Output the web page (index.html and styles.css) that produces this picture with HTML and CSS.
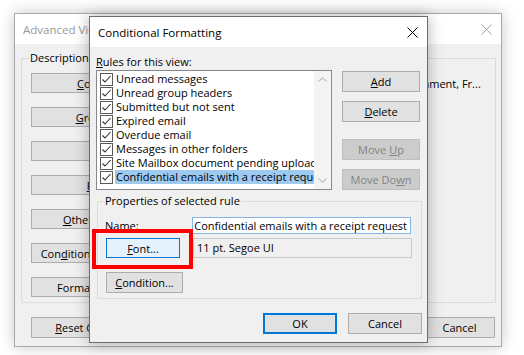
FILE: index.html
```html
<!DOCTYPE html>
<html>
<head>
  <meta charset="UTF-8">
  <title>Conditional Formatting</title>
  <link rel="stylesheet" href="styles.css">
</head>
<body>
  <div class="desktop">

    <!-- window behind: Advanced View Settings -->
    <section class="window back">
      <header class="titlebar">
        <span class="title">Advanced View Settings: Compact</span>
        <svg class="close" width="11" height="11" viewBox="0 0 11 11"><path d="M0.5 0.5L10.5 10.5M10.5 0.5L0.5 10.5"/></svg>
      </header>
      <div class="window-body">
        <fieldset class="group desc-group">
          <legend>Description</legend>
          <div class="desc-row"><button class="btn desc-btn"><u>C</u>olumns...</button><span class="desc-text">Importance, Reminder, Icon, Flag Status, Attachment, Fr...</span></div>
          <div class="desc-row"><button class="btn desc-btn"><u>G</u>roup By...</button><span class="desc-text">Conversation</span></div>
          <div class="desc-row"><button class="btn desc-btn"><u>S</u>ort...</button><span class="desc-text">Date (Conversation)</span></div>
          <div class="desc-row"><button class="btn desc-btn"><u>F</u>ilter...</button><span class="desc-text">Off</span></div>
          <div class="desc-row"><button class="btn desc-btn"><u>O</u>ther Settings...</button><span class="desc-text">Fonts and other Table View settings</span></div>
          <div class="desc-row"><button class="btn desc-btn">Con<u>d</u>itional Formatting...</button><span class="desc-text">User defined fonts on each message</span></div>
          <div class="desc-row"><button class="btn desc-btn">Format Col<u>u</u>mns...</button><span class="desc-text">Specify the display formats for each field</span></div>
        </fieldset>
        <div class="back-footer">
          <button class="btn reset-btn"><u>R</u>eset Current View</button>
          <button class="btn footer-btn">Cancel</button>
        </div>
      </div>
    </section>

    <!-- active dialog -->
    <section class="window front">
      <header class="titlebar">
        <span class="title">Conditional Formatting</span>
        <svg class="close" width="11" height="11" viewBox="0 0 11 11"><path d="M0.5 0.5L10.5 10.5M10.5 0.5L0.5 10.5"/></svg>
      </header>
      <div class="window-body">
        <div class="rules-area">
          <div class="rules-col">
            <div class="field-label"><u>R</u>ules for this view:</div>
            <div class="listbox">
              <div class="rules">
                <div class="rule"><svg class="check" width="13" height="13" viewBox="0 0 13 13"><rect x="0.5" y="0.5" width="12" height="12"/><path d="M2.5 6.5L5 9L10.5 3"/></svg><span class="rule-name">Unread messages</span></div>
                <div class="rule"><svg class="check" width="13" height="13" viewBox="0 0 13 13"><rect x="0.5" y="0.5" width="12" height="12"/><path d="M2.5 6.5L5 9L10.5 3"/></svg><span class="rule-name">Unread group headers</span></div>
                <div class="rule"><svg class="check" width="13" height="13" viewBox="0 0 13 13"><rect x="0.5" y="0.5" width="12" height="12"/><path d="M2.5 6.5L5 9L10.5 3"/></svg><span class="rule-name">Submitted but not sent</span></div>
                <div class="rule"><svg class="check" width="13" height="13" viewBox="0 0 13 13"><rect x="0.5" y="0.5" width="12" height="12"/><path d="M2.5 6.5L5 9L10.5 3"/></svg><span class="rule-name">Expired email</span></div>
                <div class="rule"><svg class="check" width="13" height="13" viewBox="0 0 13 13"><rect x="0.5" y="0.5" width="12" height="12"/><path d="M2.5 6.5L5 9L10.5 3"/></svg><span class="rule-name">Overdue email</span></div>
                <div class="rule"><svg class="check" width="13" height="13" viewBox="0 0 13 13"><rect x="0.5" y="0.5" width="12" height="12"/><path d="M2.5 6.5L5 9L10.5 3"/></svg><span class="rule-name">Messages in other folders</span></div>
                <div class="rule"><svg class="check" width="13" height="13" viewBox="0 0 13 13"><rect x="0.5" y="0.5" width="12" height="12"/><path d="M2.5 6.5L5 9L10.5 3"/></svg><span class="rule-name">Site Mailbox document pending upload</span></div>
                <div class="rule selected"><svg class="check" width="13" height="13" viewBox="0 0 13 13"><rect x="0.5" y="0.5" width="12" height="12"/><path d="M2.5 6.5L5 9L10.5 3"/></svg><span class="rule-name">Confidential emails with a receipt request</span></div>
              </div>
              <div class="scrollbar">
                <div class="scroll-btn"><svg width="9" height="5" viewBox="0 0 9 5"><path d="M0.5 4.5L4.5 0.8L8.5 4.5"/></svg></div>
                <div class="scroll-btn"><svg width="9" height="5" viewBox="0 0 9 5"><path d="M0.5 0.5L4.5 4.2L8.5 0.5"/></svg></div>
              </div>
            </div>
          </div>
          <div class="side-buttons">
            <button class="btn side-btn"><u>A</u>dd</button>
            <button class="btn side-btn"><u>D</u>elete</button>
            <button class="btn side-btn move-up" disabled>Move <u>U</u>p</button>
            <button class="btn side-btn" disabled>Move Do<u>w</u>n</button>
          </div>
        </div>

        <fieldset class="group props-group">
          <legend>Properties of selected rule</legend>
          <div class="prop-row name-row">
            <span class="prop-label"><u>N</u>ame:</span>
            <div class="textbox"><span>Confidential emails with a receipt request</span></div>
          </div>
          <div class="prop-row font-row">
            <button class="btn font-btn"><u>F</u>ont...</button>
            <div class="fontbox">11 pt. Segoe UI</div>
          </div>
          <div class="prop-row">
            <button class="btn condition-btn"><u>C</u>ondition...</button>
          </div>
        </fieldset>

        <div class="front-footer">
          <button class="btn footer-btn default">OK</button>
          <button class="btn footer-btn">Cancel</button>
        </div>
      </div>
    </section>

    <div class="callout"></div>
  </div>
</body>
</html>
```

FILE: styles.css
```css
body {
  margin: 0;
  background-color: #ffffff;
  font-family: "Open Sans", "Noto Sans", sans-serif;
  font-size: 11px;
  color: #000000;
}
u {
  text-decoration-thickness: 1px;
  text-underline-offset: 1px;
}
.desktop {
  position: relative;
  width: 524px;
  height: 355px;
  overflow: hidden;
}
.window {
  position: absolute;
  box-sizing: border-box;
  display: flex;
  flex-direction: column;
  background-color: #f0f0f0;
}
.back {
  left: 14px;
  top: 13px;
  width: 488px;
  height: 334px;
  border: 1px solid #a8a8a8;
  box-shadow: 0 0 14px rgba(0, 0, 0, 0.22);
}
.front {
  left: 89px;
  top: 16px;
  width: 339px;
  height: 327px;
  border: 1px solid #6e6e6e;
  box-shadow: 0 0 14px rgba(0, 0, 0, 0.3);
}
.titlebar {
  flex: none;
  height: 30px;
  display: flex;
  align-items: center;
  justify-content: space-between;
  padding: 0 9px 0 8px;
  background-color: #ffffff;
}
.title {
  font-size: 11.5px;
  white-space: nowrap;
}
.close path {
  fill: none;
  stroke: #000000;
  stroke-width: 1;
}
.back .title {
  color: #9a9a9a;
}
.back .close path {
  stroke: #a0a0a0;
}

/* group boxes */
.group {
  margin: 0;
  min-width: 0;
  border: 1px solid #dcdcdc;
}
.group legend {
  padding: 0 1px;
  margin-left: -2px;
  line-height: 14px;
}

/* buttons */
.btn {
  box-sizing: border-box;
  height: 21px;
  padding: 0;
  border: 1px solid #adadad;
  background-color: #e1e1e1;
  font: inherit;
  color: #000000;
  white-space: nowrap;
  overflow: hidden;
}
.btn:disabled {
  background-color: #cccccc;
  border-color: #bfbfbf;
  color: #838383;
}
.btn.default {
  border: 2px solid #0078d7;
}
.footer-btn {
  width: 74px;
}

/* back window */
.back .window-body {
  flex: 1;
  display: flex;
  flex-direction: column;
}
.desc-group {
  margin: 7px 5px 0 6px;
  padding: 8px 9px 5px;
  display: flex;
  flex-direction: column;
  gap: 14px;
}
.desc-row {
  display: flex;
  align-items: center;
  height: 20px;
}
.desc-btn {
  flex: none;
  width: 146px;
  height: 20px;
}
.desc-text {
  margin-left: 10px;
  white-space: nowrap;
  overflow: hidden;
}
.back-footer {
  display: flex;
  justify-content: space-between;
  margin-top: 14px;
  padding: 0 6px 0 16px;
}
.reset-btn {
  width: 146px;
}
.back-footer .footer-btn {
  width: 71px;
}

/* front window */
.front .window-body {
  flex: 1;
  display: flex;
  flex-direction: column;
}
.rules-area {
  display: flex;
  align-items: flex-start;
  gap: 10px;
  padding: 7px 0 0 6px;
}
.field-label {
  line-height: 16px;
  height: 16px;
}
.listbox {
  box-sizing: border-box;
  width: 236px;
  height: 120px;
  display: flex;
  border: 1px solid #828790;
  background-color: #ffffff;
}
.rules {
  flex: 1;
  min-width: 0;
  padding-top: 1px;
  overflow: hidden;
}
.rule {
  display: flex;
  align-items: center;
  height: 14px;
  padding-left: 3px;
  white-space: nowrap;
}
.check {
  flex: none;
}
.check rect {
  fill: #ffffff;
  stroke: #5a5a5a;
}
.check path {
  fill: none;
  stroke: #333333;
  stroke-width: 1.1;
}
.rule-name {
  flex: 1;
  margin-left: 2px;
  padding-left: 1px;
  line-height: 14px;
  overflow: hidden;
}
.selected .rule-name {
  background-color: #9fcaf0;
}
.scrollbar {
  flex: none;
  width: 17px;
  display: flex;
  flex-direction: column;
  justify-content: space-between;
  background-color: #f4f4f4;
}
.scroll-btn {
  height: 17px;
  display: flex;
  align-items: center;
  justify-content: center;
}
.scroll-btn path {
  fill: none;
  stroke: #c2c2c2;
  stroke-width: 1.2;
}
.side-buttons {
  display: flex;
  flex-direction: column;
  gap: 9px;
  padding-top: 17px;
}
.side-btn {
  width: 78px;
}
.side-btn.move-up {
  margin-top: 8px;
}

.props-group {
  margin: 4px 5px 0 7px;
  padding: 9px 8px 5px;
}
.prop-row {
  display: flex;
  align-items: center;
}
.name-row {
  height: 17px;
}
.prop-label {
  width: 87px;
  margin-left: -1px;
}
.textbox {
  box-sizing: border-box;
  width: 219px;
  height: 17px;
  display: flex;
  align-items: center;
  justify-content: flex-end;
  padding-right: 3px;
  overflow: hidden;
  border: 1px solid #86b6e8;
  background-color: #ffffff;
  white-space: nowrap;
}
.textbox span {
  flex: none;
}
.font-row {
  margin-top: 4px;
  margin-bottom: 14px;
}
.font-btn {
  width: 74px;
  height: 20px;
  border-color: #0078d7;
  background-color: #e5f1fb;
}
.fontbox {
  box-sizing: border-box;
  width: 219px;
  height: 20px;
  margin-left: 13px;
  padding-left: 3px;
  line-height: 18px;
  border: 1px solid #cccccc;
}
.condition-btn {
  width: 77px;
}
.front-footer {
  display: flex;
  justify-content: flex-end;
  gap: 11px;
  margin-top: 14px;
  padding-right: 5px;
}

/* red highlight drawn over the dialog */
.callout {
  position: absolute;
  left: 92px;
  top: 229px;
  width: 101px;
  height: 40px;
  box-sizing: border-box;
  border: 4px solid #ff0000;
}
```
